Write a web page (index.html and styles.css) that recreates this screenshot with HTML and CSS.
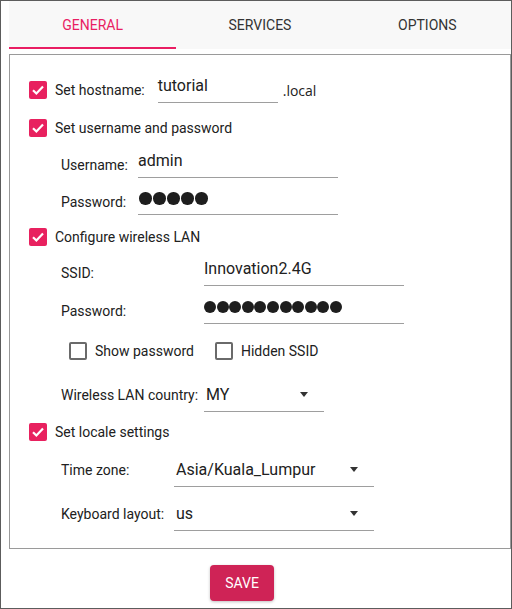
FILE: index.html
```html
<!DOCTYPE html>
<html>
<head>
<meta charset="utf-8">
<link rel="stylesheet" href="styles.css">
</head>
<body>
<div class="window">
  <div class="tabs">
    <div class="tab active">General</div>
    <div class="tab">Services</div>
    <div class="tab">Options</div>
  </div>
  <div class="panel">
    <div class="row check-row">
      <span class="cb checked"><svg viewBox="0 0 18 18" width="18" height="18"><path d="M4 9.2 L7.4 12.5 L14 5.6" fill="none" stroke="#fff" stroke-width="2.2"/></svg></span>
      <span class="label">Set hostname:</span>
      <span class="field host">tutorial</span>
      <span class="suffix">.local</span>
    </div>
    <div class="row check-row r2">
      <span class="cb checked"><svg viewBox="0 0 18 18" width="18" height="18"><path d="M4 9.2 L7.4 12.5 L14 5.6" fill="none" stroke="#fff" stroke-width="2.2"/></svg></span>
      <span class="label">Set username and password</span>
    </div>
    <div class="row field-row r3">
      <span class="label lbl-user">Username:</span>
      <span class="field wide">admin</span>
    </div>
    <div class="row field-row r4">
      <span class="label lbl-user">Password:</span>
      <span class="field wide"><span class="dots"><i></i><i></i><i></i><i></i><i></i></span></span>
    </div>
    <div class="row check-row r5">
      <span class="cb checked"><svg viewBox="0 0 18 18" width="18" height="18"><path d="M4 9.2 L7.4 12.5 L14 5.6" fill="none" stroke="#fff" stroke-width="2.2"/></svg></span>
      <span class="label">Configure wireless LAN</span>
    </div>
    <div class="row field-row r6">
      <span class="label lbl-wifi">SSID:</span>
      <span class="field wide">Innovation2.4G</span>
    </div>
    <div class="row field-row r7">
      <span class="label lbl-wifi">Password:</span>
      <span class="field wide"><span class="dots long"><i></i><i></i><i></i><i></i><i></i><i></i><i></i><i></i><i></i><i></i><i></i></span></span>
    </div>
    <div class="row opt-row r8">
      <span class="cb"></span>
      <span class="label">Show password</span>
      <span class="cb second"></span>
      <span class="label">Hidden SSID</span>
    </div>
    <div class="row field-row r9">
      <span class="label lbl-wifi">Wireless LAN country:</span>
      <span class="select narrow"><span class="value country">MY</span><span class="arrow"></span></span>
    </div>
    <div class="row check-row r10">
      <span class="cb checked"><svg viewBox="0 0 18 18" width="18" height="18"><path d="M4 9.2 L7.4 12.5 L14 5.6" fill="none" stroke="#fff" stroke-width="2.2"/></svg></span>
      <span class="label">Set locale settings</span>
    </div>
    <div class="row field-row r11">
      <span class="label lbl-locale">Time zone:</span>
      <span class="select wide"><span class="value">Asia/Kuala_Lumpur</span><span class="arrow"></span></span>
    </div>
    <div class="row field-row r12">
      <span class="label lbl-locale">Keyboard layout:</span>
      <span class="select wide"><span class="value">us</span><span class="arrow"></span></span>
    </div>
  </div>
  <div class="actions">
    <button class="save">Save</button>
  </div>
</div>
</body>
</html>
```

FILE: styles.css
```css
* { box-sizing: border-box; }
html, body { margin: 0; padding: 0; background: #fff; }
body { font-family: Roboto, "Liberation Sans", sans-serif; color: #212121; }

.window {
  width: 512px;
  height: 609px;
  border: 1px solid #5c5c5c;
  padding-left: 8px;
  overflow: hidden;
}

.tabs {
  display: flex;
  height: 48px;
  background: #f8f8f8;
}
.tab {
  flex: 1;
  display: flex;
  align-items: center;
  justify-content: center;
  font-size: 14px;
  text-transform: uppercase;
  color: #333;
}
.tab.active {
  color: #e91e63;
  box-shadow: inset 0 -2px 0 #e91e63;
}

.panel {
  margin-top: 5px;
  border: 1px solid #9a9a9a;
  padding: 18px 0 17px 0;
}

.row {
  display: flex;
  align-items: center;
  height: 34px;
}
.label { font-size: 14px; white-space: nowrap; }

.check-row { padding-left: 19px; }
.check-row .cb { margin-right: 8px; }
.field-row { padding-left: 51px; }
.opt-row { padding-left: 59px; }
.opt-row .cb { margin-right: 8px; }
.opt-row .cb.second { margin-left: 21px; }

.r2 { margin-top: 4px; }
.r3 { margin-top: 3px; }
.r4 { margin-top: 3px; }
.r5 { margin-top: 1px; }
.r6 { margin-top: 2px; }
.r7 { margin-top: 4px; }
.r8 { margin-top: 6px; }
.r9 { margin-top: 10px; }
.r10 { margin-top: 3px; }
.r11 { margin-top: 4px; }
.r12 { margin-top: 10px; }

.cb {
  width: 18px;
  height: 18px;
  border-radius: 2px;
  border: 2px solid #6a6a6a;
  flex: none;
}
.cb.checked {
  border: none;
  background: #e8215f;
}
.cb svg { display: block; }

.field {
  height: 26px;
  border-bottom: 1px solid #9e9e9e;
  font-size: 16px;
  line-height: 18px;
  white-space: nowrap;
}
.field.host { width: 120px; margin-left: 13px; }
.field.wide { width: 200px; }
.suffix {
  font-family: "Open Sans", "Liberation Sans", sans-serif;
  font-size: 14px;
  margin-left: 5px;
  color: #222;
}

.lbl-user { width: 77px; }
.lbl-wifi { width: 143px; }
.lbl-locale { width: 113px; }

.dots { display: flex; gap: 1.5px; padding-top: 3px; padding-left: 1px; }
.dots i {
  display: block;
  flex: none;
  width: 12.5px;
  height: 12.5px;
  border-radius: 50%;
  background: #1e1e1e;
}
.dots.long { gap: 0.6px; padding-left: 0; }
.dots.long i { width: 12px; height: 12px; }

.select {
  display: flex;
  align-items: center;
  height: 34px;
  border-bottom: 1px solid #9e9e9e;
  font-size: 16px;
  padding-left: 2px;
  padding-right: 16px;
}
.select.narrow { width: 120px; }
.select.wide { width: 200px; }
.value { white-space: nowrap; }
.arrow {
  margin-left: auto;
  width: 0;
  height: 0;
  border-left: 4.5px solid transparent;
  border-right: 4.5px solid transparent;
  border-top: 5px solid #333;
}

.actions {
  padding-top: 16px;
  padding-left: 201px;
}
.save {
  width: 64px;
  height: 36px;
  border: none;
  border-radius: 4px;
  background: #cf2356;
  color: #fff;
  font-family: Roboto, "Liberation Sans", sans-serif;
  font-size: 14px;
  text-transform: uppercase;
  box-shadow: 0 1px 3px rgba(0,0,0,0.25);
  padding: 0;
}
```
